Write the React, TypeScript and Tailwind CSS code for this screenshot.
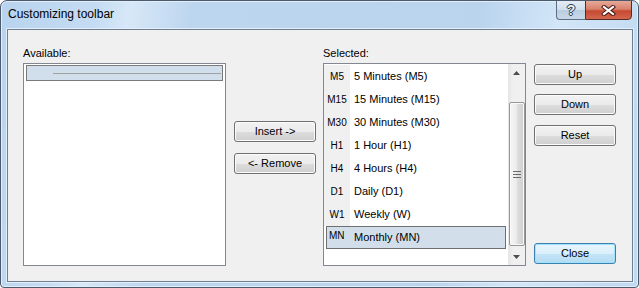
import React from "react";

const items = [
  { code: "M5", label: "5 Minutes (M5)" },
  { code: "M15", label: "15 Minutes (M15)" },
  { code: "M30", label: "30 Minutes (M30)" },
  { code: "H1", label: "1 Hour (H1)" },
  { code: "H4", label: "4 Hours (H4)" },
  { code: "D1", label: "Daily (D1)" },
  { code: "W1", label: "Weekly (W)" },
  { code: "MN", label: "Monthly (MN)", selected: true },
];

const Button = ({ children, isDefault }: { children: React.ReactNode; isDefault?: boolean }) => (
  <button
    className={
      isDefault
        ? "w-[82px] h-[21px] rounded-[3px] border border-[#3c7fb1] bg-[linear-gradient(#e8f5fc_0%,#dbeffa_50%,#c4e4f7_51%,#b4dcf3_100%)] shadow-[inset_0_0_0_1px_#9fe3fb] text-[11px] leading-none text-black"
        : "w-[82px] h-[21px] rounded-[3px] border border-[#707070] bg-[linear-gradient(#f2f2f2_0%,#ebebeb_50%,#dddddd_51%,#cfcfcf_100%)] shadow-[inset_0_0_0_1px_#fbfbfb] text-[11px] leading-none text-black"
    }
  >
    {children}
  </button>
);

const ScrollBar = () => (
  <div className="w-[17px] h-full bg-[linear-gradient(90deg,#e4e4e4,#f0f0f0_30%,#f0f0f0)] flex flex-col items-center">
    <div className="h-[17px] w-full flex items-center justify-center">
      <svg width="7" height="4" viewBox="0 0 7 4">
        <path d="M0 4 L3.5 0 L7 4 Z" fill="#4d4d4d" />
      </svg>
    </div>
    <div className="h-[21px]" />
    <div className="w-[16px] h-[144px] rounded-[2px] border border-[#979797] bg-[linear-gradient(90deg,#f6f6f6,#ececec_45%,#dcdcdc_55%,#cfcfcf)] shadow-[inset_0_0_0_1px_#fafafa] flex items-center justify-center">
      <svg width="8" height="7" viewBox="0 0 8 7">
        <path d="M0 0.5 H8 M0 3.5 H8 M0 6.5 H8" stroke="#6a6a6a" strokeWidth="1" />
      </svg>
    </div>
    <div className="flex-1" />
    <div className="h-[17px] w-full flex items-center justify-center">
      <svg width="7" height="4" viewBox="0 0 7 4">
        <path d="M0 0 L7 0 L3.5 4 Z" fill="#4d4d4d" />
      </svg>
    </div>
  </div>
);

export default function App() {
  return (
    <div className="w-[639px] h-[288px] rounded-t-[7px] rounded-b-[4px] border border-[#4b5a6c] bg-[linear-gradient(100deg,#b8d3ee_0%,#c4dcf3_14%,#d7e8f8_19%,#bdd6ef_28%,#bad4ee_70%,#d3e6f8_82%,#c1daf2_95%)] shadow-[inset_0_0_0_1px_#e3eef9] flex flex-col overflow-hidden font-['Liberation_Sans',Arial,sans-serif]">
      {/* Title bar */}
      <div className="h-[28px] flex items-start justify-between">
        <span className="pl-[7px] pt-[6px] text-[12px] leading-[15px] text-black">Customizing toolbar</span>
        <div className="flex mr-[6px] -mt-[1px]">
          <div className="w-[29px] h-[20px] rounded-bl-[4px] border border-[#5d6e82] border-r-0 bg-[linear-gradient(#e3ecf5_0%,#d0deec_50%,#b9cde0_51%,#c8d9ea_100%)] flex items-center justify-center">
            <span className="text-[14px] font-bold leading-none text-[#e9eef3] [text-shadow:1px_0_0_#2a3a4d,-1px_0_0_#2a3a4d,0_1px_0_#2a3a4d,0_-1px_0_#2a3a4d]">?</span>
          </div>
          <div className="w-[47px] h-[20px] rounded-br-[4px] border border-[#5a2a24] bg-[linear-gradient(#e8a898_0%,#d9826d_45%,#c54a32_55%,#d2664c_100%)] flex items-center justify-center">
            <svg width="15" height="11" viewBox="0 0 15 11">
              <path d="M3 2 L12 9 M12 2 L3 9" stroke="#4a1e18" strokeWidth="4.2" strokeLinecap="square" />
              <path d="M3 2 L12 9 M12 2 L3 9" stroke="#ffffff" strokeWidth="2.2" strokeLinecap="square" />
            </svg>
          </div>
        </div>
      </div>

      {/* Client area */}
      <div className="ml-[6px] w-[626px] h-[253px] border border-[#6e7e91] shadow-[0_0_0_1px_#e6f0fa] bg-[#f0f0f0] flex items-start pt-[17px] pl-[15px] text-[11px] text-black">
        {/* Available */}
        <div className="w-[203px] flex flex-col">
          <span className="leading-[13px] mb-[3px]">Available:</span>
          <div className="h-[203px] border border-[#828790] bg-white pt-[1px] px-[2px]">
            <div className="h-[16px] border border-[#7a7a7a] bg-[#d1deeb] flex items-center pl-[26px] pr-[1px]">
              <div className="flex-1 h-[1px] bg-[#a0a0a0]" />
            </div>
          </div>
        </div>

        {/* Insert / Remove */}
        <div className="ml-[8px] flex flex-col pt-[74px] gap-[11px]">
          <Button>Insert -&gt;</Button>
          <Button>&lt;- Remove</Button>
        </div>

        {/* Selected */}
        <div className="ml-[7px] w-[203px] flex flex-col">
          <span className="leading-[13px] mb-[3px]">Selected:</span>
          <div className="h-[203px] border border-[#828790] bg-white flex">
            <div className="flex-1 flex flex-col pt-[1px]">
              {items.map((item) =>
                item.selected ? (
                  <div key={item.code} className="h-[23px] mx-[2px] border border-[#6f6f6f] bg-[#d2dfeb] flex items-center">
                    <span className="w-[23px] pl-[2px] pb-[4px] text-[10px] leading-none">{item.code}</span>
                    <span className="pl-[4px] leading-none">{item.label}</span>
                  </div>
                ) : (
                  <div key={item.code} className="h-[23px] flex items-stretch">
                    <span className="w-[26px] bg-[#f0f0f0] flex items-center justify-center text-[10px] leading-none">{item.code}</span>
                    <span className="pl-[4px] flex items-center leading-none">{item.label}</span>
                  </div>
                )
              )}
            </div>
            <ScrollBar />
          </div>
        </div>

        {/* Right buttons */}
        <div className="ml-[8px] flex flex-col pt-[17px]">
          <Button>Up</Button>
          <div className="h-[9px]" />
          <Button>Down</Button>
          <div className="h-[10px]" />
          <Button>Reset</Button>
          <div className="h-[97px]" />
          <Button isDefault>Close</Button>
        </div>
      </div>
    </div>
  );
}
